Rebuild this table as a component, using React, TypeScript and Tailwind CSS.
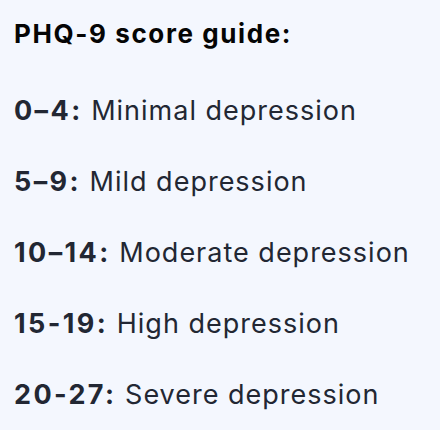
import React from 'react';

const rows = [
  { range: '0–4:', label: 'Minimal depression' },
  { range: '5–9:', label: 'Mild depression' },
  { range: '10–14:', label: 'Moderate depression' },
  { range: '15-19:', label: 'High depression' },
  { range: '20-27:', label: 'Severe depression' },
];

export default function App() {
  return (
    <div className="h-[430px] w-[440px] bg-[#f4f7fe] px-[14px] pt-[16px] font-['Inter',sans-serif]">
      <h2 className="text-[26px] font-bold leading-[36px] tracking-[1.6px] text-[#050505]">PHQ-9 score guide:</h2>
      <div className="mt-[41px] flex flex-col gap-[35px]">
        {rows.map((r) => (
          <p key={r.range} className="whitespace-nowrap text-[27px] leading-[36px] tracking-[1px] text-[#222733]">
            <span className="font-bold tracking-[2.4px]">{r.range}</span> {r.label}
          </p>
        ))}
      </div>
    </div>
  );
}
